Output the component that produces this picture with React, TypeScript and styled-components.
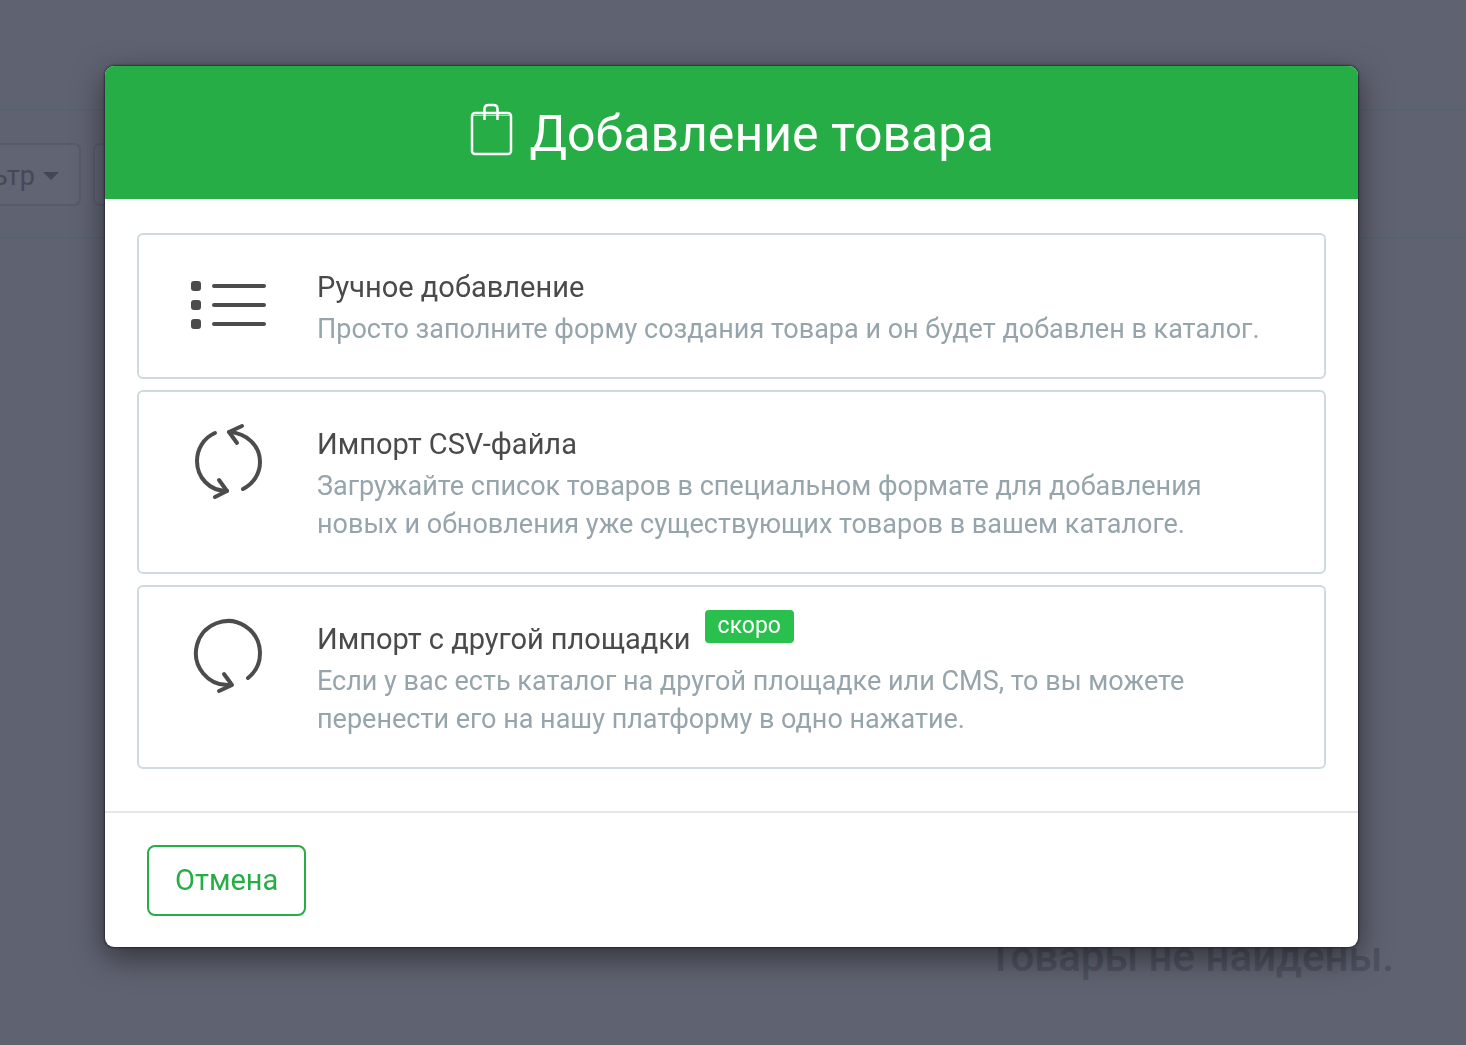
import React from "react";
import styled, { createGlobalStyle } from "styled-components";

const GlobalStyle = createGlobalStyle`
  * { box-sizing: border-box; }
  body {
    margin: 0;
    background: #5f6270;
    font-family: Roboto, "Noto Sans", sans-serif;
    overflow: hidden;
  }
`;

const Page = styled.div`
  min-height: 100vh;
  overflow: hidden;
`;

const TopBar = styled.header`
  height: 111px;
  border-bottom: 2px solid #586170;
`;

const Toolbar = styled.div`
  display: flex;
  align-items: center;
  gap: 12px;
  height: 128px;
  border-bottom: 2px solid #586170;
`;

const FilterSlot = styled.div`
  display: flex;
  justify-content: flex-end;
  width: 81px;
`;

const ToolButton = styled.button`
  display: flex;
  flex: none;
  align-items: center;
  gap: 8px;
  height: 63px;
  min-width: 160px;
  padding: 4px 20px 0;
  justify-content: flex-end;
  border: 2px solid #585b69;
  border-radius: 7px;
  background: #616472;
  color: #444857;
  font: 400 27px/38px Roboto, "Noto Sans", sans-serif;
`;

const Caret = styled.span`
  border: 8px solid transparent;
  border-top-color: #424655;
  border-bottom: 0;
`;

const Empty = styled.p`
  margin: 694px 72px 0 0;
  color: #4e515f;
  font-size: 42px;
  line-height: 48px;
  font-weight: 500;
  text-align: right;
`;

const Overlay = styled.div`
  position: fixed;
  inset: 0;
  padding: 66px 108px 0 105px;
`;

const Modal = styled.section`
  overflow: hidden;
  border-radius: 9px;
  background: #fff;
  box-shadow: 0 0 2px 1px rgba(20, 20, 32, 0.6), 0 10px 31px rgba(0, 0, 0, 0.5);
`;

const ModalHeader = styled.header`
  display: flex;
  align-items: center;
  justify-content: center;
  gap: 16px;
  height: 133px;
  background: #26ad46;
  color: #fff;
`;

const Title = styled.h1`
  margin: 0;
  padding-top: 2px;
  font-size: 50px;
  line-height: 60px;
  font-weight: 400;
`;

const Options = styled.div`
  display: grid;
  gap: 11px;
  padding: 34px 32px 42px;
`;

const Option = styled.button`
  display: grid;
  grid-template-columns: 178px 1fr;
  padding: 33px 32px 29px 0;
  border: 2px solid #cfdadd;
  border-radius: 6px;
  background: #fff;
  font-family: inherit;
  text-align: left;
  cursor: pointer;
`;

const IconCell = styled.span`
  display: flex;
  justify-content: center;
`;

const Heading = styled.span`
  display: flex;
  gap: 14px;
  margin-bottom: 4px;
  color: #4a4a4a;
  font-size: 29px;
  line-height: 38px;
`;

const Description = styled.span`
  display: block;
  max-width: 960px;
  color: #96a4ab;
  font-size: 27px;
  line-height: 38px;
`;

const Badge = styled.span`
  height: 33px;
  margin-top: -10px;
  padding: 0 13px;
  border-radius: 4px;
  background: #29c04d;
  color: #fff;
  font-size: 23px;
  line-height: 32px;
`;

const ModalFooter = styled.footer`
  padding: 32px 42px 31px;
  border-top: 2px solid #e4e6e7;
`;

const CancelButton = styled.button`
  height: 71px;
  padding: 0 26px 2px;
  border: 2px solid #26ad46;
  border-radius: 8px;
  background: #fff;
  color: #26ad46;
  font: 400 29px/42px Roboto, "Noto Sans", sans-serif;
  cursor: pointer;
`;

const BagIcon = () => (
  <svg width="44" height="60" viewBox="0 0 44 60" fill="none" stroke="#fff" strokeWidth="2.5" aria-hidden="true">
    <rect x="3" y="10" width="39" height="41" rx="3" />
    <path d="M3 12.5H42" strokeWidth="1" opacity="0.6" />
    <path d="M15.5 17V6q0-4 4-4h5q4 0 4 4v11" />
  </svg>
);

const ListIcon = () => (
  <svg width="78" height="72" viewBox="0 0 78 72" fill="none" stroke="#4c4c4c" strokeWidth="4" strokeLinecap="round" aria-hidden="true">
    {[18, 37, 56].map((y) => (
      <g key={y}>
        <rect x="2" y={y - 5} width="10" height="10" rx="3" fill="#4c4c4c" stroke="none" />
        <path d={`M25 ${y}H75`} />
      </g>
    ))}
  </svg>
);

const SyncIcon = () => (
  <svg width="78" height="78" viewBox="0 0 78 78" overflow="visible" fill="none" stroke="#4c4c4c" strokeWidth="4" strokeLinecap="round" strokeLinejoin="round" aria-hidden="true">
    <path d="M26 8C14 13 8 25 8 36C8 52 20 66 38 66" />
    <path d="M30 55L38 66L26 72" />
    <path d="M40 7C58 8 71 21 71 37C71 49 64 59 54 64" />
    <path d="M48 18L40 7L53 1" />
  </svg>
);

const RefreshIcon = () => (
  <svg width="78" height="78" viewBox="0 0 78 78" overflow="visible" fill="none" stroke="#4c4c4c" strokeWidth="4" strokeLinecap="round" strokeLinejoin="round" aria-hidden="true">
    <path d="M59 58A32 32 0 1 0 41 65" />
    <path d="M35 54L43 65L30 71" />
  </svg>
);

export default function App() {
  return (
    <>
      <GlobalStyle />
      <Page>
        <TopBar />
        <Toolbar>
          <FilterSlot>
            <ToolButton type="button">Фильтр<Caret /></ToolButton>
          </FilterSlot>
          <ToolButton type="button" aria-label="Действия" />
        </Toolbar>
        <Empty>Товары не найдены.</Empty>
      </Page>
      <Overlay>
        <Modal role="dialog" aria-modal="true" aria-labelledby="modal-title">
          <ModalHeader>
            <BagIcon />
            <Title id="modal-title">Добавление товара</Title>
          </ModalHeader>
          <Options>
            <Option type="button">
              <IconCell><ListIcon /></IconCell>
              <span>
                <Heading>Ручное добавление</Heading>
                <Description>Просто заполните форму создания товара и он будет добавлен в каталог.</Description>
              </span>
            </Option>
            <Option type="button">
              <IconCell><SyncIcon /></IconCell>
              <span>
                <Heading>Импорт CSV-файла</Heading>
                <Description>Загружайте список товаров в специальном формате для добавления новых и обновления уже существующих товаров в вашем каталоге.</Description>
              </span>
            </Option>
            <Option type="button">
              <IconCell><RefreshIcon /></IconCell>
              <span>
                <Heading>Импорт с другой площадки<Badge>скоро</Badge></Heading>
                <Description>Если у вас есть каталог на другой площадке или CMS, то вы можете перенести его на нашу платформу в одно нажатие.</Description>
              </span>
            </Option>
          </Options>
          <ModalFooter>
            <CancelButton type="button">Отмена</CancelButton>
          </ModalFooter>
        </Modal>
      </Overlay>
    </>
  );
}
